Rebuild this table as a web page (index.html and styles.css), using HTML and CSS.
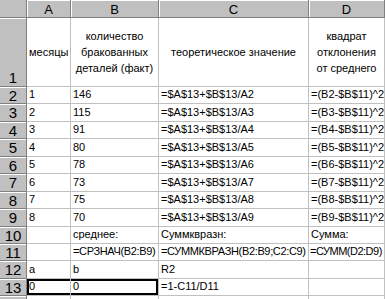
FILE: index.html
```html
<!DOCTYPE html>
<html>
<head>
<meta charset="utf-8">
<link rel="stylesheet" href="styles.css">
</head>
<body>
<div class="sheet">
  <div class="hd corner"></div>
  <div class="hd col">A</div>
  <div class="hd col">B</div>
  <div class="hd col">C</div>
  <div class="hd col">D</div>

  <div class="hd row row-bottom">1</div>
  <div class="c mid">месяцы</div>
  <div class="c wrap">количество бракованных деталей (факт)</div>
  <div class="c wrap">теоретическое значение</div>
  <div class="c wrap">квадрат отклонения от среднего</div>

  <div class="hd row">2</div><div class="c">1</div><div class="c">146</div><div class="c">=$A$13+$B$13/A2</div><div class="c">=(B2-$B$11)^2</div>
  <div class="hd row">3</div><div class="c">2</div><div class="c">115</div><div class="c">=$A$13+$B$13/A3</div><div class="c">=(B3-$B$11)^2</div>
  <div class="hd row">4</div><div class="c">3</div><div class="c">91</div><div class="c">=$A$13+$B$13/A4</div><div class="c">=(B4-$B$11)^2</div>
  <div class="hd row">5</div><div class="c">4</div><div class="c">80</div><div class="c">=$A$13+$B$13/A5</div><div class="c">=(B5-$B$11)^2</div>
  <div class="hd row">6</div><div class="c">5</div><div class="c">78</div><div class="c">=$A$13+$B$13/A6</div><div class="c">=(B6-$B$11)^2</div>
  <div class="hd row">7</div><div class="c">6</div><div class="c">73</div><div class="c">=$A$13+$B$13/A7</div><div class="c">=(B7-$B$11)^2</div>
  <div class="hd row">8</div><div class="c">7</div><div class="c">75</div><div class="c">=$A$13+$B$13/A8</div><div class="c">=(B8-$B$11)^2</div>
  <div class="hd row">9</div><div class="c">8</div><div class="c">70</div><div class="c">=$A$13+$B$13/A9</div><div class="c">=(B9-$B$11)^2</div>
  <div class="hd row">10</div><div class="c"></div><div class="c">среднее:</div><div class="c">Суммквразн:</div><div class="c">Сумма:</div>
  <div class="hd row">11</div><div class="c"></div><div class="c tight">=СРЗНАЧ(B2:B9)</div><div class="c tight">=СУММКВРАЗН(B2:B9;C2:C9)</div><div class="c tighter">=СУММ(D2:D9)</div>
  <div class="hd row">12</div><div class="c">a</div><div class="c">b</div><div class="c">R2</div><div class="c"></div>
  <div class="hd row">13</div><div class="c sel-l">0</div><div class="c sel-r">0</div><div class="c">=1-C11/D11</div><div class="c"></div>
  <div class="hd row">14</div><div class="c"></div><div class="c"></div><div class="c"></div><div class="c"></div>
</div>
</body>
</html>
```

FILE: styles.css
```css
html, body {
  margin: 0;
  padding: 0;
  background: #ffffff;
  overflow: hidden;
}

.sheet {
  display: grid;
  grid-template-columns: 27px 44px 88px 150px 76px;
  grid-template-rows: 18px 69px 17px 18px 17px 18px 17px 18px 17px 18px 17px 17px 18px 17px 20px;
  width: 385px;
  height: 299px;
  overflow: hidden;
  font-family: "Liberation Sans", Arial, sans-serif;
  font-size: 11px;
  color: #000;
}

.c {
  box-sizing: border-box;
  border-right: 1px solid #c0c0c0;
  border-bottom: 1px solid #c0c0c0;
  padding: 0 2px 2px 2px;
  white-space: nowrap;
  overflow: visible;
  display: flex;
  align-items: flex-end;
  line-height: 14px;
}

.c.tight {
  letter-spacing: -0.35px;
}

.c.tighter {
  letter-spacing: -0.5px;
  padding-left: 1px;
}

.c.mid {
  align-items: center;
  padding-top: 1px;
}

.c.wrap {
  white-space: normal;
  text-align: center;
  justify-content: center;
  align-items: center;
  line-height: 16px;
  padding-top: 1px;
}

.c.sel-l {
  box-shadow: inset 2px 2px 0 #000, inset 0 -2px 0 #000;
}

.c.sel-r {
  box-shadow: inset 0 2px 0 #000, inset -2px -2px 0 #000;
}

.hd {
  box-sizing: border-box;
  background: #c0c0c0;
  border-right: 1px solid #808080;
  border-bottom: 1px solid #808080;
  box-shadow: inset 1px 1px 0 #ffffff;
  display: flex;
  justify-content: center;
  align-items: center;
  overflow: hidden;
}

.corner {
  box-shadow: none;
}

.col {
  font-size: 13px;
  padding-top: 2px;
}

.row {
  font-size: 15px;
  box-shadow: inset 0 1px 0 #ffffff;
  align-items: flex-start;
  line-height: 17px;
}

.row-bottom {
  align-items: flex-end;
}
```
